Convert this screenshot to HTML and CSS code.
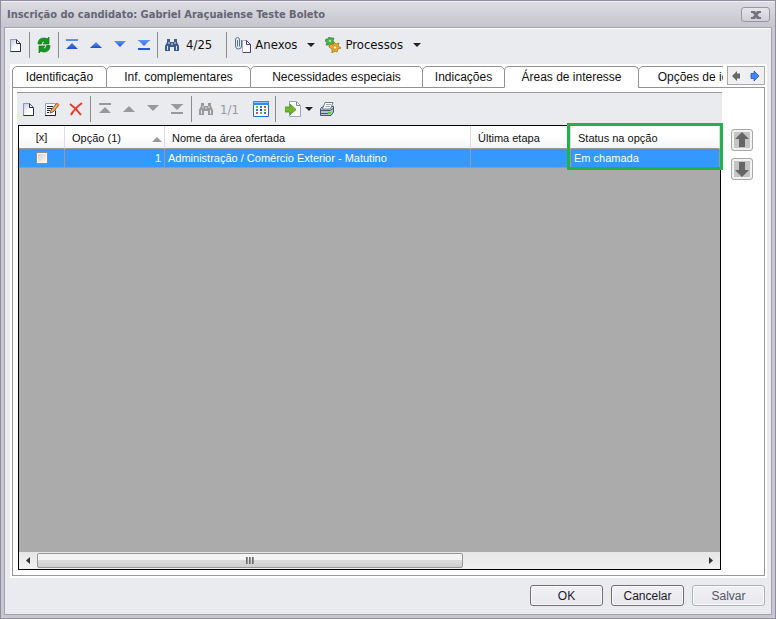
FILE: index.html
```html
<!DOCTYPE html>
<html lang="pt-BR">
<head>
<meta charset="utf-8">
<title>Inscrição do candidato</title>
<link rel="stylesheet" href="styles.css">
</head>
<body>
<svg class="defs" aria-hidden="true">
  <defs>
    <linearGradient id="blue" x1="0" y1="0" x2="0" y2="1"><stop offset="0" stop-color="#5c97f5"/><stop offset="1" stop-color="#1f50cc"/></linearGradient>
    <linearGradient id="sheet" x1="0" y1="0" x2="1" y2="1"><stop offset="0" stop-color="#c3cadb"/><stop offset=".6" stop-color="#fff"/></linearGradient>
    <symbol id="page" viewBox="0 0 16 16"><path d="M3.500 2.500H9.500L13.500 6.500V14.500H3.500Z" fill="url(#sheet)" stroke="#8d97bb"/><path d="M9.500 2.500V6.500H13.500V14.500H3.500" fill="none" stroke="#282c66"/><path d="M9.500 2.500L13.500 6.500" stroke="#5d6494"/></symbol>
    <symbol id="first" viewBox="0 0 16 16"><path d="M2 2H14V4H2ZM8 6L14 12H2Z"/></symbol>
    <symbol id="prev" viewBox="0 0 16 16"><path d="M8 5L14 11H2Z"/></symbol>
    <symbol id="next" viewBox="0 0 16 16"><path d="M2 4H14L8 10Z"/></symbol>
    <symbol id="last" viewBox="0 0 16 16"><path d="M2 3H14L8 9ZM2 11H14V13H2ZM2 3H14V4H2Z"/></symbol>
    <symbol id="find" viewBox="0 0 16 16"><path d="M3 2H6V5H10V2H13V5L15 9V14H10V10H6V14H1V9L3 5Z"/><path d="M3.500 9V13M12.500 9V13M5 5V7M11 5V7M7 7H9" stroke="#dce6f5" fill="none"/></symbol>
  </defs>
</svg>
<main class="window">
  <header class="titlebar">
    <h1>Inscrição do candidato: Gabriel Araçuaiense Teste Boleto</h1>
    <button class="close" aria-label="Fechar"><svg width="10" height="8" viewBox="0 0 10 8"><path d="M0 0H4L5 1.500 6 0H10V2H8.500L6.500 4 8.500 6H10V8H6L5 6.500 4 8H0V6H1.500L3.500 4 1.500 2H0Z" fill="#73727f"/></svg></button>
  </header>
  <div class="client">
    <div class="toolbar main" role="toolbar" aria-label="Principal">
      <button class="tool" aria-label="Novo"><svg class="icon"><use href="#page"/></svg></button>
      <span class="sep"></span>
      <button class="tool" aria-label="Atualizar"><svg class="icon" viewBox="0 0 16 16"><path d="M2 7Q2 1 8 1Q10 1 11 2L13 0V7H7L9 4.500Q6 3.500 5.500 7Z" fill="#14971d" stroke="#087511" stroke-width=".7"/><path d="M14 8.500Q14 15 8 15Q6 15 5 14L3 16V9H9L7 11.500Q10 12.500 10.500 8.500Z" fill="#14971d" stroke="#087511" stroke-width=".7"/></svg></button>
      <span class="sep"></span>
      <div class="nav">
        <button class="tool" aria-label="Primeiro"><svg class="icon blue"><use href="#first"/></svg></button>
        <button class="tool" aria-label="Anterior"><svg class="icon blue"><use href="#prev"/></svg></button>
        <button class="tool" aria-label="Próximo"><svg class="icon blue"><use href="#next"/></svg></button>
        <button class="tool" aria-label="Último"><svg class="icon blue"><use href="#last"/></svg></button>
      </div>
      <span class="sep"></span>
      <button class="tool" aria-label="Localizar"><svg class="icon navy"><use href="#find"/></svg></button>
      <span class="count">4/25</span>
      <span class="sep"></span>
      <button class="menu"><svg class="icon" viewBox="0 0 16 16"><path d="M7.500 3.500H11.500L15.500 7.500V15.500H7.500Z" fill="#fff" stroke="#aaa9c9"/><path d="M11.500 3.500L15.500 7.500V15.500H8M11.500 3.500V7.500H15.500" fill="none" stroke="#4f3984"/><path d="M4.500 3V9.500M6.500 3V9Q6.500 12 3.500 12T.5 9V3Q.5 .5 2.500 .5T4.500 3M2.500 3V9.500" fill="none" stroke="#58728b"/></svg><span>Anexos</span><i class="caret"></i></button>
      <button class="menu"><svg class="icon" viewBox="0 0 16 16"><path d="M1 2L3 2 4 0 6 1 9 1 8 4 10 6 7 7 6 10 4 8 1 8 2 5 0 4Z" fill="#48b54b" stroke="#278536" stroke-width=".7"/><path d="M5 7L8 8 9 5 11 7 14 6 13 9 16 11 13 12 12 15 10 14 7 16 7 12 4 10Z" fill="#e9ae29" stroke="#a6711a" stroke-width=".8"/><circle cx="10" cy="10.500" r="1.700" fill="#fff3c1" stroke="#a6711a" stroke-width=".6"/><circle cx="5" cy="4" r="1" fill="#c9f4c6"/></svg><span>Processos</span><i class="caret"></i></button>
    </div>

    <section class="tabs">
      <div class="tabrow">
        <div class="tablist" role="tablist">
          <button role="tab" class="tab w1">Identificação</button>
          <button role="tab" class="tab w2">Inf. complementares</button>
          <button role="tab" class="tab w3">Necessidades especiais</button>
          <button role="tab" class="tab w4">Indicações</button>
          <button role="tab" class="tab w5 active" aria-selected="true">Áreas de interesse</button>
          <button role="tab" class="tab w6">Opções de idioma</button>
        </div>
        <div class="spin">
          <button aria-label="Abas anteriores"><svg width="10" height="12" viewBox="0 0 10 12"><path d="M0 6L5 1V3.500H8V8.500H5V11Z" fill="#686868"/></svg></button>
          <button aria-label="Próximas abas"><svg width="10" height="12" viewBox="0 0 10 12"><path d="M9 6L4 1V3.500H1V8.500H4V11Z" fill="#4086f4" stroke="#1746c0" stroke-width=".7"/></svg></button>
        </div>
      </div>
      <div class="panel" role="tabpanel">
        <div class="content">
          <div class="toolbar sub" role="toolbar" aria-label="Áreas de interesse">
            <div class="nav">
              <button class="tool" aria-label="Novo"><svg class="icon"><use href="#page"/></svg></button>
              <button class="tool" aria-label="Editar"><svg class="icon" viewBox="0 0 16 16"><path d="M1.500 2.500H11.500V14.500H1.500Z" fill="#fff" stroke="#99a1b8"/><path d="M1 14.500H11.500V10M3 5.500H9M3 7.500H8M3 9.500H6M3 11.500H5" stroke="#23233b" fill="none"/><path d="M6 12L7 9 13 2 15 4 9 11Z" fill="#f0b35a" stroke="#664024" stroke-width=".8"/><path d="M12 3L13.500 1.500 15.500 3.500 14 5Z" fill="#e57d7d"/></svg></button>
              <button class="tool" aria-label="Excluir"><svg class="icon" viewBox="0 0 16 16"><path d="M2 3Q8 7 13 14M14 2Q6 8 3 14" fill="none" stroke="#ee3823" stroke-width="2"/></svg></button>
            </div>
            <span class="sep"></span>
            <div class="nav">
              <button class="tool" disabled aria-label="Primeiro"><svg class="icon gray"><use href="#first"/></svg></button>
              <button class="tool" disabled aria-label="Anterior"><svg class="icon gray"><use href="#prev"/></svg></button>
              <button class="tool" disabled aria-label="Próximo"><svg class="icon gray"><use href="#next"/></svg></button>
              <button class="tool" disabled aria-label="Último"><svg class="icon gray"><use href="#last"/></svg></button>
            </div>
            <span class="sep"></span>
            <button class="tool" disabled aria-label="Localizar"><svg class="icon gray"><use href="#find"/></svg></button>
            <span class="count dim">1/1</span>
            <button class="tool" aria-label="Colunas"><svg class="icon" viewBox="0 0 16 16"><path d="M.5 .5H15.500V15.500H.5Z" fill="#fff" stroke="#1d71d2"/><path d="M0 2H16" stroke="#338bea" stroke-width="4"/><path d="M1 1.500H15" stroke="#8cc1f8"/><path d="M3 6H5M11 9H13M7 12H9" stroke="#76b65b" stroke-width="2"/><path d="M7 6H9M3 9H5M11 12H13" stroke="#3278d2" stroke-width="2"/><path d="M11 6H13M3 12H5" stroke="#bd5748" stroke-width="2"/><path d="M7 9H9" stroke="#223b92" stroke-width="2"/></svg></button>
            <span class="sep"></span>
            <button class="tool export" aria-label="Exportar"><svg class="icon" viewBox="0 0 16 16"><path d="M4.500 .5H11.500L15.500 4.500V15.500H4.500Z" fill="#f9fbfe" stroke="#9aa6b9"/><path d="M11.500 1V4.500H15" fill="none" stroke="#73839d"/><path d="M0 6H5V3L11 8.500 5 14V11H0Z" fill="#76b928" stroke="#4f8c16" stroke-width=".8"/></svg><i class="caret"></i></button>
            <button class="tool" aria-label="Imprimir"><svg class="icon" viewBox="0 0 16 16"><path d="M1.500 7.500L4 5.500H14.500V11L12 14.500H1.500Z" fill="#b9c4d0" stroke="#46566b"/><path d="M6 1.500H14L11.500 8H3.500Z" fill="#fff" stroke="#6d7f98"/><path d="M7 3.500H12M6.500 5.500H11" stroke="#9aaec5"/><path d="M2 9.500H11.500L14 7.500M2 12.500H9" fill="none" stroke="#46566b"/><path d="M9 11H12V13H9Z" fill="#43d431"/></svg></button>
          </div>
          <div class="grid">
            <div class="rows">
              <table>
                <colgroup><col class="c1"><col class="c2"><col class="c3"><col class="c4"><col></colgroup>
                <thead><tr><th class="mid">[x]</th><th class="sorted"><span>Opção (1)</span><i class="sort"></i></th><th>Nome da área ofertada</th><th>Última etapa</th><th>Status na opção</th></tr></thead>
                <tbody><tr><td class="mid"><input type="checkbox" aria-label="Selecionar opção 1"></td><td class="num">1</td><td>Administração / Comércio Exterior - Matutino</td><td></td><td>Em chamada</td></tr></tbody>
              </table>
            </div>
            <div class="scroll">
              <button aria-label="Rolar à esquerda"><svg width="4" height="7" viewBox="0 0 4 7"><path d="M4 0V7L0 3.500Z" fill="#333"/></svg></button>
              <div class="track"><div class="thumb"><i></i><i></i><i></i></div></div>
              <button aria-label="Rolar à direita"><svg width="4" height="7" viewBox="0 0 4 7"><path d="M0 0V7L4 3.500Z" fill="#333"/></svg></button>
            </div>
            <div class="highlight"></div>
          </div>
        </div>
        <div class="order">
          <button aria-label="Mover para cima"><svg width="16" height="16" viewBox="0 0 16 16"><path d="M8 0L15 7H11V15H5V7H1Z" fill="#666"/></svg></button>
          <button aria-label="Mover para baixo"><svg width="16" height="16" viewBox="0 0 16 16"><path d="M8 16L15 9H11V1H5V9H1Z" fill="#666"/></svg></button>
        </div>
      </div>
    </section>
    <footer>
      <button>OK</button>
      <button>Cancelar</button>
      <button disabled>Salvar</button>
    </footer>
  </div>
</main>
</body>
</html>
```
FILE: styles.css
```css
* { box-sizing: border-box; }
body { margin: 0; font: 12px "Liberation Sans", sans-serif; color: #111; }
button { margin: 0; padding: 0; border: 0; background: none; font: inherit; color: inherit; }
svg { display: block; flex: none; }
.defs { position: absolute; width: 0; height: 0; }
.window { display: flex; flex-direction: column; min-height: 100vh; padding: 0 3px 3px; border: 1px solid #918f9f; background: #c8c7d1; }
.titlebar { display: flex; align-items: center; justify-content: space-between; height: 26px; margin: 0 -3px; padding: 0 5px 0 6px; border-top: 1px solid #f1f1f5; background: linear-gradient(#dcdce2, #c6c5cf); }
h1 { margin: 0; font: bold 11px "DejaVu Sans Condensed", sans-serif; color: #656575; white-space: nowrap; }
.close { display: flex; align-items: center; justify-content: center; width: 29px; height: 15px; border: 1px solid #9695a3; border-radius: 3px; background: linear-gradient(#e5e5ea, #d0cfd8); }
.client { flex: 1; display: flex; flex-direction: column; border: 1px solid #a3a2b0; background: #eaebef; }
.toolbar { display: flex; align-items: center; gap: 6px; height: 36px; padding: 0 2px 4px; border-top: 1px solid #fff; font: 13px "DejaVu Sans Condensed", sans-serif; }
.tool, .menu { display: flex; align-items: center; }
.icon { width: 16px; height: 16px; }
.blue { fill: url(#blue); }
.navy { fill: #3d5d91; }
.gray { fill: #999; }
.sep { width: 1px; height: 26px; background: #8b8b8b; }
.nav { display: flex; gap: 8px; }
.main .nav { margin: 0 -1px; }
.count { margin-right: 8px; }
.dim { color: #999; }
.menu { gap: 4px; margin: 0 2px; }
.caret { border: 4px solid transparent; border-top-color: #222; border-bottom: 0; margin-left: 6px; }

.tabs { flex: 1; display: flex; flex-direction: column; margin: 0 4px 0 5px; padding: 2px; background: #fff; }
.tabrow { display: flex; align-items: flex-start; justify-content: space-between; height: 22px; margin-bottom: -1px; position: relative; }
.tablist { display: flex; flex: 1; overflow: hidden; margin-right: 4px; }
.tab { flex: none; height: 22px; margin-right: -1px; border: 1px solid #929292; border-radius: 5px 5px 0 0; background: #fff; }
.active { border-bottom-color: #fff; }
.w1 { width: 95px; } .w2 { width: 145px; } .w3 { width: 173px; }
.w4 { width: 83px; } .w5 { width: 135px; } .w6 { width: 136px; }
.spin { display: flex; width: 38px; height: 19px; border: 1px solid #aaa; background: #f0f0f3; }
.spin button { flex: 1; display: flex; align-items: center; justify-content: center; }
.panel { flex: 1; display: flex; gap: 9px; padding: 4px 11px 5px 4px; border: 1px solid #999; }
.content { flex: 1; min-width: 0; display: flex; flex-direction: column; }
.sub { height: 33px; padding: 0 3px; border-top: 1px solid #999; background: #eaebef; }
.export { margin-left: 3px; }
.export .caret { margin-left: 4px; }
.grid { position: relative; flex: 1; display: flex; flex-direction: column; margin: 0 1px; border: 1px solid #000; background: #ababab; }
.rows { flex: 1; font-size: 11px; }
table { width: 100%; table-layout: fixed; border-collapse: separate; border-spacing: 0; }
.c1 { width: 46px; } .c2 { width: 100px; } .c3 { width: 306px; } .c4 { width: 100px; }
th { height: 23px; padding: 2px 7px 0; border-right: 1px solid #ddd; border-bottom: 1px solid #999; background: linear-gradient(#fff 50%, #f2f3f5); font-weight: normal; text-align: left; white-space: nowrap; }
td { height: 19px; padding: 0 3px; border-right: 1px solid #999; border-bottom: 1px solid #999; background: #3399ff; color: #fff; white-space: nowrap; }
th.mid, td.mid { padding: 0; text-align: center; }
.sorted span { display: inline-block; width: 80px; }
.sort { display: inline-block; border: 5px solid transparent; border-bottom-color: #999; border-top: 0; }
.num { text-align: right; }
input { appearance: none; display: block; width: 12px; height: 12px; margin: 0 auto; border: 1px solid #8b8f94; background: linear-gradient(135deg, #ccc, #fff); box-shadow: inset 0 0 0 1px #f4f4f4; }
.scroll { display: flex; height: 17px; background: linear-gradient(#e6e6e6, #f1f1f1); }
.scroll button { width: 18px; display: flex; align-items: center; justify-content: center; }
.track { flex: 1; padding: 1px 0; }
.thumb { display: flex; align-items: center; justify-content: center; gap: 1px; width: 64%; height: 15px; border: 1px solid #979797; border-radius: 2px; background: linear-gradient(#f4f4f4 45%, #dadada 50%, #d0d0d0); }
.thumb i { width: 2px; height: 7px; background: linear-gradient(90deg, #555, #aaa); }
.highlight { position: absolute; top: -3px; right: -3px; width: 156px; height: 47px; border: 3px solid #22b14c; }
.order { display: flex; flex-direction: column; gap: 7px; padding-top: 37px; }
.order button { display: flex; align-items: center; justify-content: center; width: 22px; height: 22px; border: 1px solid #aaa; border-radius: 3px; background: #c4c4c4; box-shadow: inset 0 0 0 2px #f2f2f2; }
footer { display: flex; justify-content: flex-end; gap: 8px; padding: 7px 6px 8px; }
footer button { width: 73px; height: 21px; border: 1px solid #707070; border-radius: 3px; background: linear-gradient(#f1f1f4, #e8e8ed); box-shadow: inset 0 0 0 1px #fafafc; color: #1a1a2c; }
footer button:disabled { border-color: #adb2b5; color: #555565; }
```
